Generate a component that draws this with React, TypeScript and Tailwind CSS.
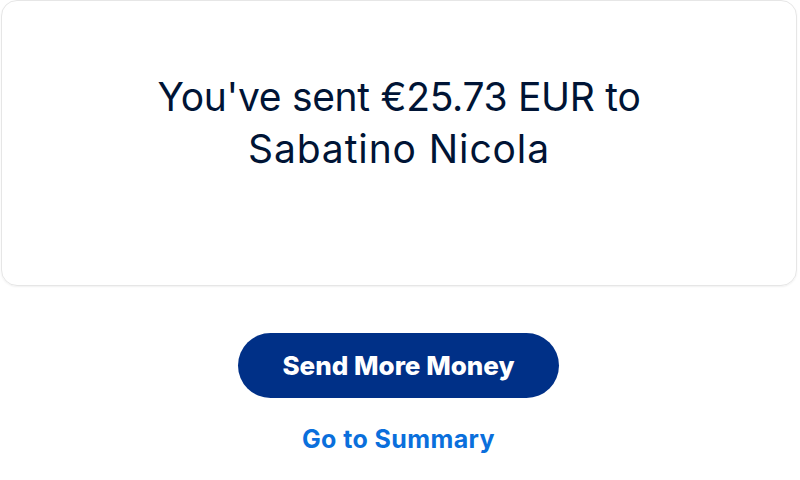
export default function App() {
  return (
    <div className="w-[800px] h-[480px] bg-white flex flex-col" style={{ fontFamily: "Inter, 'Noto Sans', sans-serif" }}>
      <div className="ml-[1px] mr-[3px] h-[286px] rounded-[16px] border border-[#e6e6e6] shadow-[0_1px_2px_rgba(0,0,0,0.06)] flex items-center justify-center">
        <h1 className="text-center text-[39px] leading-[52px] text-[#001435] font-normal w-[580px] -mt-[40px]">
          <span className="block tracking-[-0.3px]">You've sent €25.73 EUR to</span>
          <span className="block tracking-[0.9px]">Sabatino Nicola</span>
        </h1>
      </div>
      <div className="flex flex-col items-center pt-[47px] pr-[3px]">
        <button className="w-[321px] h-[65px] rounded-full bg-[#003087] text-white text-[26px] font-extrabold tracking-[0px]">
          Send More Money
        </button>
        <a className="mt-[25px] text-[#0a6fdc] text-[25px] font-bold leading-[32px] tracking-[0.4px]">Go to Summary</a>
      </div>
    </div>
  );
}
